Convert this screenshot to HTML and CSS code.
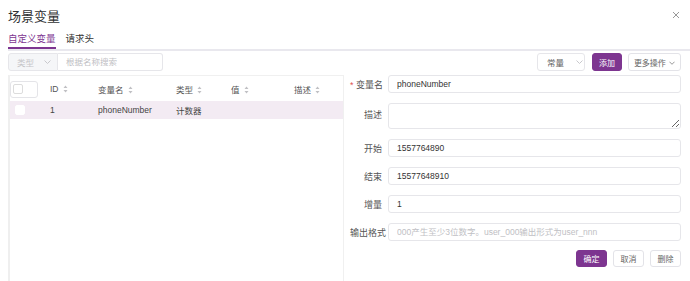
FILE: index.html
```html
<!DOCTYPE html>
<html lang="zh-CN">
<head>
    <meta charset="UTF-8">
    <title>场景变量</title>
    <link rel="stylesheet" href="styles.css">
</head>
<body>
    <div class="dialog">
        <div class="dialog-header">
            <span class="dialog-title">场景变量</span>
            <svg class="close" width="8" height="8" viewBox="0 0 8 8"><path d="M1 1L7 7M7 1L1 7" stroke="#999" stroke-width="1"/></svg>
        </div>

        <div class="tabs">
            <span class="tab active">自定义变量</span>
            <span class="tab">请求头</span>
        </div>

        <div class="toolbar">
            <div class="search-group">
                <div class="type-select">类型 <svg class="chevron" width="7" height="4" viewBox="0 0 7 4"><path d="M0.5 0.5L3.5 3.5L6.5 0.5" fill="none" stroke="#c8c8cc"/></svg></div>
                <input class="search-input" type="text" placeholder="根据名称搜索">
            </div>
            <div class="actions">
                <div class="select-box">常量 <svg class="chevron" width="7" height="4" viewBox="0 0 7 4"><path d="M0.5 0.5L3.5 3.5L6.5 0.5" fill="none" stroke="#c8c8cc"/></svg></div>
                <button class="btn btn-primary btn-add">添加</button>
                <button class="btn btn-more">更多操作 <svg class="chevron" width="6" height="4" viewBox="0 0 7 4"><path d="M0.5 0.5L3.5 3.5L6.5 0.5" fill="none" stroke="#888"/></svg></button>
            </div>
        </div>

        <div class="main">
            <div class="table-panel">
                <table class="var-table">
                    <thead>
                        <tr>
                            <th class="col-check"><span class="check-cell"><span class="checkbox"></span></span></th>
                            <th class="col-id">ID <svg class="sort" width="5" height="8" viewBox="0 0 5 8"><path d="M2.5 0.5L4.5 3H0.5Z M2.5 7.5L4.5 5H0.5Z" fill="#c0c0c4"/></svg></th>
                            <th class="col-name">变量名 <svg class="sort" width="5" height="8" viewBox="0 0 5 8"><path d="M2.5 0.5L4.5 3H0.5Z M2.5 7.5L4.5 5H0.5Z" fill="#c0c0c4"/></svg></th>
                            <th class="col-type">类型 <svg class="sort" width="5" height="8" viewBox="0 0 5 8"><path d="M2.5 0.5L4.5 3H0.5Z M2.5 7.5L4.5 5H0.5Z" fill="#c0c0c4"/></svg></th>
                            <th class="col-value">值 <svg class="sort" width="5" height="8" viewBox="0 0 5 8"><path d="M2.5 0.5L4.5 3H0.5Z M2.5 7.5L4.5 5H0.5Z" fill="#c0c0c4"/></svg></th>
                            <th>描述 <svg class="sort" width="5" height="8" viewBox="0 0 5 8"><path d="M2.5 0.5L4.5 3H0.5Z M2.5 7.5L4.5 5H0.5Z" fill="#c0c0c4"/></svg></th>
                        </tr>
                    </thead>
                    <tbody>
                        <tr class="selected">
                            <td class="col-check"><span class="checkbox white"></span></td>
                            <td>1</td>
                            <td>phoneNumber</td>
                            <td>计数器</td>
                            <td></td>
                            <td></td>
                        </tr>
                    </tbody>
                </table>
            </div>

            <form class="form-panel">
                <div class="form-row">
                    <label class="required">变量名</label>
                    <input class="field" type="text" value="phoneNumber">
                </div>
                <div class="form-row top">
                    <label>描述</label>
                    <textarea class="field area"></textarea>
                </div>
                <div class="form-row">
                    <label>开始</label>
                    <input class="field" type="text" value="1557764890">
                </div>
                <div class="form-row">
                    <label>结束</label>
                    <input class="field" type="text" value="15577648910">
                </div>
                <div class="form-row">
                    <label>增量</label>
                    <input class="field" type="text" value="1">
                </div>
                <div class="form-row">
                    <label>输出格式</label>
                    <input class="field" type="text" placeholder="000产生至少3位数字。user_000输出形式为user_nnn">
                </div>
                <div class="form-buttons">
                    <button type="button" class="btn btn-primary">确定</button>
                    <button type="button" class="btn">取消</button>
                    <button type="button" class="btn">删除</button>
                </div>
            </form>
        </div>
    </div>
</body>
</html>
```

FILE: styles.css
```css
body {
    margin: 0;
    padding: 0;
    background-color: #fff;
    font-family: "Liberation Sans", "Noto Sans CJK SC", sans-serif;
    color: #333;
    font-size: 9px;
}
.dialog {
    padding: 0 9px 0 8px;
    height: 281px;
    box-sizing: border-box;
    overflow: hidden;
}
.dialog-header {
    display: flex;
    justify-content: space-between;
    align-items: center;
    height: 30px;
}
.dialog-title {
    font-size: 13px;
    color: #303133;
}
.close {
    margin-right: 1px;
}
.tabs {
    display: flex;
    gap: 10px;
    height: 19px;
    border-bottom: 2px solid #e9e8ee;
    margin-right: -9px;
}
.tab {
    font-size: 9.5px;
    color: #333;
    line-height: 17px;
    height: 17px;
}
.tab.active {
    color: #7d3590;
    border-bottom: 2px solid #7d3590;
}
.toolbar {
    display: flex;
    justify-content: space-between;
    align-items: center;
    margin-top: 2px;
    height: 18px;
}
.search-group {
    display: flex;
}
.type-select {
    display: flex;
    align-items: center;
    width: 40px;
    height: 16px;
    padding-left: 8px;
    border: 1px solid #e6e6ea;
    border-radius: 3px 0 0 3px;
    background-color: #f5f6f8;
    color: #c5c5c8;
    font-size: 8.5px;
}
.type-select .chevron {
    margin-left: 10px;
}
.search-input {
    width: 105px;
    height: 18px;
    box-sizing: border-box;
    border: 1px solid #e6e6ea;
    border-left: none;
    border-radius: 0 3px 3px 0;
    padding: 0 8px;
    font-size: 8.5px;
    font-family: inherit;
    outline: none;
}
.search-input::placeholder {
    color: #c0c0c4;
}
.actions {
    display: flex;
    align-items: center;
}
.select-box {
    display: flex;
    align-items: center;
    width: 37px;
    height: 16px;
    padding-left: 9px;
    border: 1px solid #e6e6ea;
    border-radius: 3px;
    color: #666;
    font-size: 8.5px;
    margin-right: 7px;
}
.select-box .chevron {
    margin-left: 12px;
}
.btn {
    height: 18px;
    padding: 0 8px;
    border: 1px solid #e3e3e8;
    border-radius: 3px;
    background-color: #fff;
    color: #666;
    font-size: 8px;
    font-family: inherit;
    cursor: pointer;
}
.btn-primary {
    background-color: #7d3590;
    border-color: #7d3590;
    color: #fff;
}
.btn-add {
    width: 30px;
    padding: 0;
    margin-right: 6px;
}
.btn-more {
    width: 53px;
    padding: 0;
}
.btn-more .chevron {
    margin-left: 1px;
    vertical-align: middle;
}
.main {
    display: flex;
    gap: 6px;
    margin-top: 4px;
}
.table-panel {
    width: 336px;
    height: 210px;
    box-sizing: border-box;
    border: 1px solid #f0f0f0;
    border-left: 2px solid #efefef;
    padding-top: 1px;
}
.var-table {
    width: 100%;
    border-collapse: collapse;
    font-size: 8.5px;
}
.var-table th {
    text-align: left;
    font-weight: normal;
    color: #555;
    height: 24px;
    padding: 0;
}
.var-table td {
    height: 18px;
    padding: 0;
    color: #444;
}
.col-check {
    width: 40px;
}
.col-id {
    width: 48px;
}
.col-name {
    width: 78px;
}
.col-type {
    width: 55px;
}
.col-value {
    width: 63px;
}
.sort {
    margin-left: 2px;
    vertical-align: -1px;
}
.check-cell {
    display: flex;
    align-items: center;
    width: 24px;
    height: 15px;
    border: 1px solid #e4e4e8;
    border-radius: 3px;
    padding-left: 2px;
}
.checkbox {
    display: inline-block;
    width: 8px;
    height: 8px;
    border: 1px solid #dcdcdc;
    border-radius: 2px;
    background-color: #fff;
    vertical-align: middle;
}
.checkbox.white {
    margin-left: 5px;
    border-color: #fff;
}
.var-table tr.selected {
    background-color: #f3ebf3;
}
.form-panel {
    flex: 1;
    display: flex;
    flex-direction: column;
    gap: 10px;
}
.form-row {
    display: flex;
    align-items: center;
    gap: 6px;
}
.form-row.top {
    align-items: flex-start;
}
.form-row.top label {
    margin-top: 5px;
}
.form-row label {
    width: 32px;
    text-align: right;
    font-size: 9px;
    color: #555;
    white-space: nowrap;
}
.form-row label.required::before {
    content: "* ";
    color: #e05050;
}
.field {
    flex: 1;
    height: 18px;
    box-sizing: border-box;
    border: 1px solid #e6e6ea;
    border-radius: 3px;
    padding: 0 8px;
    font-size: 8.5px;
    font-family: inherit;
    color: #333;
    outline: none;
}
.field::placeholder {
    color: #c0c0c4;
}
.field.area {
    height: 26px;
    resize: vertical;
}
.form-buttons {
    display: flex;
    justify-content: flex-end;
    gap: 6px;
    margin-top: -1px;
}
.form-buttons .btn {
    height: 17px;
    width: 31px;
    padding: 0;
}
```
